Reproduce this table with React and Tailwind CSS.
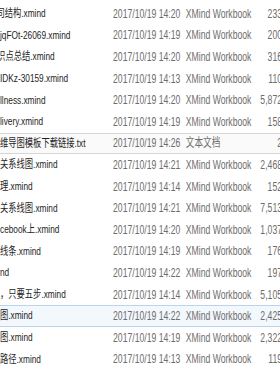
const rows = [
    { name: "司结构.xmind", shift: "-ml-[5px]", date: "2017/10/19 14:20", type: "XMind Workbook", size: "233 KB" },
    { name: "jqFOt-26069.xmind", shift: "", date: "2017/10/19 14:19", type: "XMind Workbook", size: "200 KB" },
    { name: "识点总结.xmind", shift: "-ml-[4px]", date: "2017/10/19 14:20", type: "XMind Workbook", size: "316 KB" },
    { name: "IDKz-30159.xmind", shift: "", date: "2017/10/19 14:13", type: "XMind Workbook", size: "110 KB" },
    { name: "llness.xmind", shift: "", date: "2017/10/19 14:20", type: "XMind Workbook", size: "5,872 KB" },
    { name: "livery.xmind", shift: "", date: "2017/10/19 14:19", type: "XMind Workbook", size: "158 KB" },
    { name: "维导图模板下载链接.txt", shift: "", date: "2017/10/19 14:26", type: "文本文档", size: "2 KB", state: "hover" },
    { name: "关系线图.xmind", shift: "", date: "2017/10/19 14:21", type: "XMind Workbook", size: "2,468 KB" },
    { name: "理.xmind", shift: "", date: "2017/10/19 14:14", type: "XMind Workbook", size: "152 KB" },
    { name: "关系线图.xmind", shift: "", date: "2017/10/19 14:21", type: "XMind Workbook", size: "7,513 KB" },
    { name: "cebook上.xmind", shift: "", date: "2017/10/19 14:20", type: "XMind Workbook", size: "1,037 KB" },
    { name: "线条.xmind", shift: "", date: "2017/10/19 14:19", type: "XMind Workbook", size: "176 KB" },
    { name: "nd", shift: "", date: "2017/10/19 14:22", type: "XMind Workbook", size: "197 KB" },
    { name: "，只要五步.xmind", shift: "", date: "2017/10/19 14:14", type: "XMind Workbook", size: "5,105 KB" },
    { name: "图.xmind", shift: "", date: "2017/10/19 14:22", type: "XMind Workbook", size: "2,425 KB", state: "selected" },
    { name: "图.xmind", shift: "", date: "2017/10/19 14:19", type: "XMind Workbook", size: "2,322 KB" },
    { name: "路径.xmind", shift: "", date: "2017/10/19 14:13", type: "XMind Workbook", size: "119 KB" },
];

const rowStyle = {
    hover: "border-[#d6d6d6] bg-[#fafafa]",
    selected: "border-[#bcd3ec] bg-[#f3f8fd]",
};

const App = () => {
    return (
        <div className="w-[280px] h-[380px] overflow-hidden bg-white font-['Liberation_Sans','Noto_Sans_CJK_SC',sans-serif] text-[12px]">
            <div className="w-[420px] pt-[3px] origin-top-left scale-x-[0.72]">
                {rows.map((row, i) => (
                    <div
                        key={i}
                        className={`flex items-center h-[21.6px] border-y ${
                            rowStyle[row.state] || "border-transparent"
                        }`}
                    >
                        <div className="w-[157px] shrink-0 overflow-hidden whitespace-nowrap">
                            <span className={`block text-[11.5px] text-[#1e1e1e] ${row.shift}`}>
                                {row.name}
                            </span>
                        </div>
                        <div className="w-[101px] shrink-0 whitespace-nowrap text-[#6d6d6d]">
                            {row.date}
                        </div>
                        <div className="w-[96px] shrink-0 whitespace-nowrap text-[#6d6d6d]">
                            {row.type}
                        </div>
                        <div className="w-[57px] shrink-0 whitespace-nowrap text-right text-[#6d6d6d]">
                            {row.size}
                        </div>
                    </div>
                ))}
            </div>
        </div>
    );
};

export default App;
